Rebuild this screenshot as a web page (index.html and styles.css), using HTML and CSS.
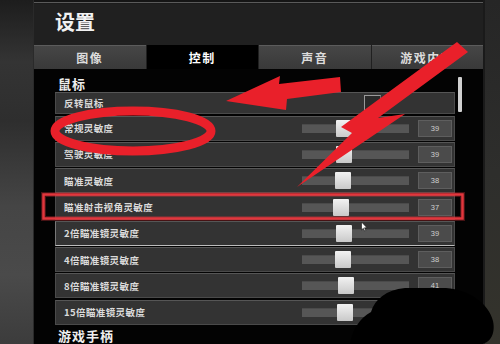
FILE: index.html
```html
<!DOCTYPE html>
<html lang="zh-CN">
<head>
    <meta charset="UTF-8">
    <meta name="viewport" content="width=device-width, initial-scale=1.0">
    <title>设置 - 控制</title>
    <link rel="stylesheet" href="styles.css">
</head>
<body>
    <div class="screen">
        <div class="bezel-left"></div>

        <div class="panel">
            <div class="top-strip"></div>
            <div class="header">
                <h1>设置</h1>
            </div>

            <div class="tabs">
                <div class="tab">图像</div>
                <div class="tab active">控制</div>
                <div class="tab">声音</div>
                <div class="tab">游戏内容</div>
            </div>

            <div class="content">
                <div class="list">
                    <div class="section">鼠标</div>

                    <div class="row row-check">
                        <span class="label">反转鼠标</span>
                        <span class="checkbox"></span>
                    </div>

                    <div class="row">
                        <span class="label">常规灵敏度</span>
                        <div class="slider"><span class="knob" style="left: 34px"></span></div>
                        <span class="value">39</span>
                    </div>
                    <div class="row">
                        <span class="label">驾驶灵敏度</span>
                        <div class="slider"><span class="knob" style="left: 34px"></span></div>
                        <span class="value">39</span>
                    </div>
                    <div class="row">
                        <span class="label">瞄准灵敏度</span>
                        <div class="slider"><span class="knob" style="left: 33px"></span></div>
                        <span class="value">38</span>
                    </div>
                    <div class="row">
                        <span class="label">瞄准射击视角灵敏度</span>
                        <div class="slider"><span class="knob" style="left: 31px"></span></div>
                        <span class="value">37</span>
                    </div>
                    <div class="row row-hover">
                        <span class="label">2倍瞄准镜灵敏度</span>
                        <div class="slider"><span class="knob" style="left: 34px"></span></div>
                        <span class="value">39</span>
                    </div>
                    <div class="row">
                        <span class="label">4倍瞄准镜灵敏度</span>
                        <div class="slider"><span class="knob" style="left: 33px"></span></div>
                        <span class="value">38</span>
                    </div>
                    <div class="row">
                        <span class="label">8倍瞄准镜灵敏度</span>
                        <div class="slider"><span class="knob" style="left: 36px"></span></div>
                        <span class="value">41</span>
                    </div>
                    <div class="row">
                        <span class="label">15倍瞄准镜灵敏度</span>
                        <div class="slider"><span class="knob" style="left: 35px"></span></div>
                        <span class="value">40</span>
                    </div>

                    <div class="section section-pad">游戏手柄</div>
                </div>

                <div class="scroll"><span class="thumb"></span></div>
            </div>
        </div>

        <div class="bezel-right"></div>

        <!-- hand-drawn markup on top of the screenshot -->
        <svg class="marks" width="500" height="344" viewBox="0 0 500 344">
            <polygon class="red" points="226,101 280,76 279,84 340,77 341,92 287,99 286,110"/>
            <ellipse class="red-line" cx="133" cy="131" rx="78" ry="20"/>
            <polygon class="red" points="457,42 468,52 378,118 405,114 297,187 352,133 341,127"/>
            <rect class="box-glow" x="43.5" y="194.5" width="419" height="24"/>
            <rect class="box" x="43.5" y="194.5" width="419" height="24"/>
            <path class="cursor" d="M361.5 222 L361.5 230 L363.3 228.3 L364.6 231 L365.8 230.4 L364.5 227.8 L367 227.8 Z"/>
            <path class="blob" d="M350 344 C352 330 360 318 371 312 C375 299 386 290 405 288 L446 288 C470 290 489 304 493 321 C496 335 489 344 480 344 Z"/>
        </svg>
    </div>
</body>
</html>
```

FILE: styles.css
```css
:root {
    --red: #e9202a;
    --row: #333333;
    --row-line: #4a4a4a;
    --text: #dadada;
}

body {
    margin: 0;
    background: #111;
    font-family: "Noto Sans CJK SC", "Noto Sans", sans-serif;
}

.screen {
    position: relative;
    display: flex;
    width: 500px;
    height: 344px;
    overflow: hidden;
}

.bezel-left {
    width: 33px;
    background: linear-gradient(180deg, #1d1d1d 0%, #343434 18%, #2e2e2e 35%, #454545 60%, #4a4a4a 80%, #3c3c3c 100%);
}

.bezel-right {
    width: 17px;
    background: linear-gradient(180deg, #262626 0%, #2e2e2c 50%, #34332c 100%);
    border-left: 2px solid #1a1a1a;
    box-sizing: border-box;
}

.panel {
    width: 450px;
    display: flex;
    flex-direction: column;
    background: #000;
    border-left: 1px solid #2a2a2a;
    box-sizing: border-box;
}

.top-strip {
    height: 4px;
    background: linear-gradient(180deg, #151515 0 2px, #5a5a5a 2px 3px, #1c1c1c 3px);
}

.header {
    height: 41px;
    background: #202020;
    display: flex;
    align-items: center;
    padding-left: 21px;
    padding-bottom: 4px;
    box-sizing: border-box;
}

h1 {
    margin: 0;
    font-size: 20px;
    font-weight: 700;
    line-height: 1;
    color: #f2f2f2;
}

.tabs {
    height: 25px;
    display: grid;
    grid-template-columns: repeat(4, 1fr);
    gap: 1px;
    background: #202020;
}

.tab {
    display: flex;
    align-items: center;
    justify-content: center;
    background: linear-gradient(180deg, #464646, #393939);
    border-top: 1px solid #5c5c5c;
    color: #dcdcdc;
    font-size: 12px;
    font-weight: 700;
    letter-spacing: 1.5px;
}

.tab.active {
    background: #000;
    border-top-color: #000;
    color: #fff;
}

.content {
    flex: 1;
    display: flex;
    padding-left: 21px;
    background: #030303;
}

.list {
    width: 400px;
}

.section {
    padding: 6px 0 0 3px;
    line-height: 17px;
    font-size: 13px;
    font-weight: 700;
    letter-spacing: 1px;
    color: #eee;
}

.section-pad {
    padding-top: 1px;
}

.row {
    height: 25px;
    margin-bottom: 1.3px;
    box-sizing: border-box;
    display: flex;
    align-items: center;
    padding: 0 2px 0 8px;
    background: var(--row);
    border: 1px solid var(--row-line);
    border-top-color: #565656;
}

.row-check {
    height: 22px;
}

.row-hover {
    border-left-color: #777;
    border-bottom-color: #bdbdbd;
}

.label {
    font-size: 9.5px;
    font-weight: 700;
    letter-spacing: 0.4px;
    color: var(--text);
    white-space: nowrap;
}

.checkbox {
    margin-left: auto;
    margin-right: 71px;
    width: 17px;
    height: 17px;
    box-sizing: border-box;
    background: #2a2a2a;
    border: 1px solid #9a9a9a;
    border-right-color: #6a6a6a;
    border-bottom-color: #6a6a6a;
}

.slider {
    position: relative;
    margin-left: auto;
    width: 107px;
    height: 9px;
    background: #565656;
    border-top: 1px solid #4a4a4a;
    box-sizing: border-box;
}

.knob {
    position: absolute;
    top: -5px;
    width: 16px;
    height: 17px;
    border-radius: 1px;
    background: linear-gradient(180deg, #f2f2f2, #c9c9c9);
}

.value {
    margin-left: 9px;
    width: 34px;
    height: 17px;
    box-sizing: border-box;
    display: flex;
    align-items: center;
    justify-content: center;
    background: #4b4b4b;
    border: 1px solid #5e5e5e;
    color: #cfcfcf;
    font-family: "Liberation Sans", sans-serif;
    font-size: 7.5px;
}

.scroll {
    margin-left: 3px;
    width: 4px;
    padding-top: 8px;
}

.thumb {
    display: block;
    height: 35px;
    background: #d0d0d0;
    border-radius: 1px;
}

/* annotations */
.marks {
    position: absolute;
    left: 0;
    top: 0;
    pointer-events: none;
}

.red {
    fill: var(--red);
}

.red-line {
    fill: none;
    stroke: var(--red);
    stroke-width: 9;
}

.box {
    fill: none;
    stroke: #e2363c;
    stroke-width: 2.5;
}

.box-glow {
    fill: none;
    stroke: rgba(226, 54, 60, 0.3);
    stroke-width: 5;
}

.cursor {
    fill: #fff;
    stroke: #111;
    stroke-width: 0.6;
}

.blob {
    fill: #000;
}
```
